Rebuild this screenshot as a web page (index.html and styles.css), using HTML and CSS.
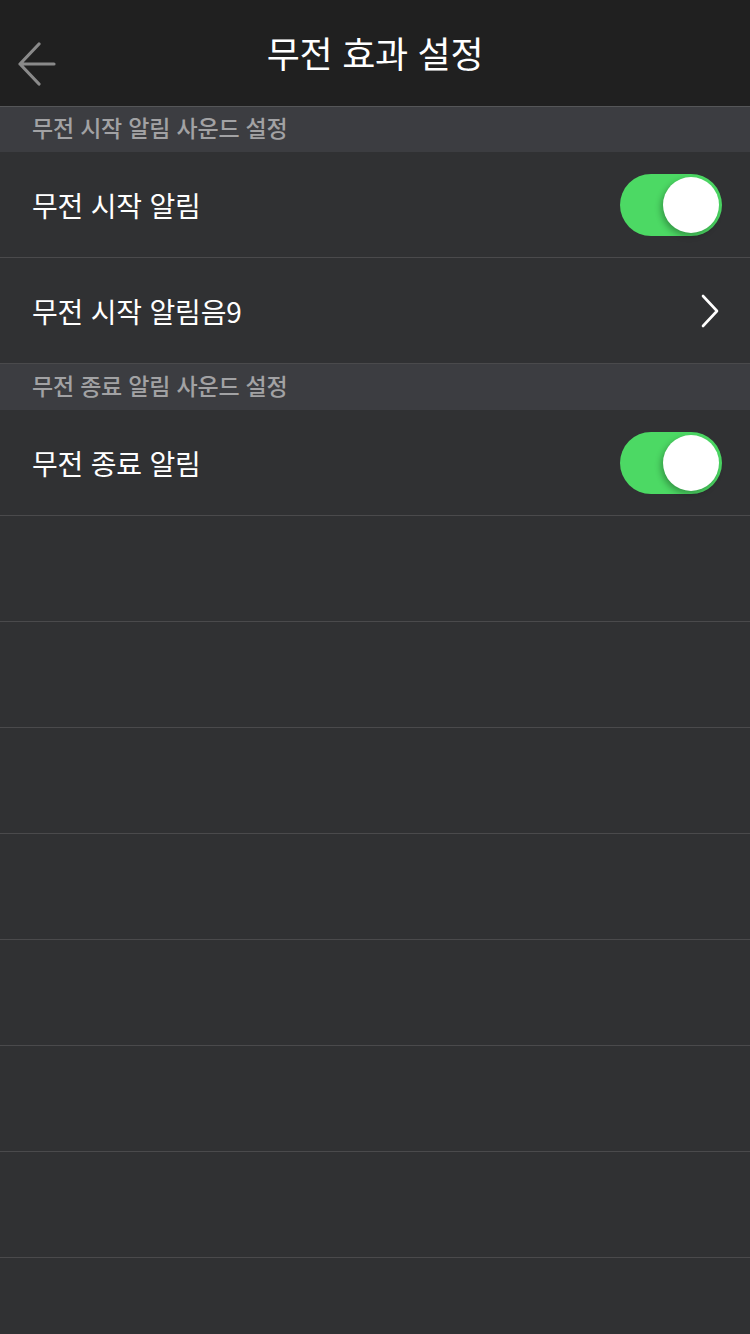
FILE: index.html
```html
<!DOCTYPE html>
<html lang="ko">
<head>
<meta charset="utf-8">
<link rel="stylesheet" href="styles.css">
</head>
<body>
<div class="page">
  <header class="topbar">
    <button class="back" aria-label="뒤로">
      <svg width="40" height="44" viewBox="0 0 40 44"><path d="M22 2 L3 22 L22 42 M3 22 H37" fill="none" stroke="#8a8a8a" stroke-width="3.2" stroke-linecap="round" stroke-linejoin="round"/></svg>
    </button>
    <h1 class="title">무전 효과 설정</h1>
  </header>
  <div class="section">무전 시작 알림 사운드 설정</div>
  <div class="row"><span class="label">무전 시작 알림</span><span class="toggle on"><span class="knob"></span></span></div>
  <div class="row"><span class="label">무전 시작 알림음9</span>
    <svg class="chev" width="20" height="34" viewBox="0 0 20 34"><path d="M3 2 L17 17 L3 32" fill="none" stroke="#fff" stroke-width="2.6" stroke-linecap="round" stroke-linejoin="round"/></svg>
  </div>
  <div class="section tall">무전 종료 알림 사운드 설정</div>
  <div class="row"><span class="label">무전 종료 알림</span><span class="toggle on"><span class="knob"></span></span></div>
  <div class="row"></div>
  <div class="row"></div>
  <div class="row"></div>
  <div class="row"></div>
  <div class="row"></div>
  <div class="row"></div>
  <div class="row"></div>
  <div class="row"></div>
</div>
</body>
</html>
```
FILE: styles.css
```css
html, body { margin: 0; padding: 0; }
body {
  background: #303133;
  font-family: "Noto Sans CJK KR", "Noto Sans", sans-serif;
  width: 750px;
  height: 1334px;
  overflow: hidden;
}
.page { display: flex; flex-direction: column; }
.topbar {
  background: #202020;
  border-bottom: 1px solid #555658;
  display: flex;
  align-items: center;
  justify-content: center;
  position: relative;
  box-sizing: border-box;
  height: 107px;
}
.back {
  position: absolute;
  left: 17px;
  top: 42px;
  background: none;
  border: 0;
  padding: 0;
  width: 40px;
  height: 44px;
}
.back svg { display: block; }
.title {
  margin: 0;
  color: #ffffff;
  font-size: 36px;
  font-weight: 400;
  letter-spacing: -0.3px;
  margin-top: -2px;
}
.section {
  height: 45px;
  box-sizing: border-box;
  background: #3c3d41;
  color: #a2a2a4;
  font-size: 23px;
  font-weight: 500;
  padding: 0 0 5px 32px;
  display: flex;
  align-items: center;
  letter-spacing: -0.2px;
}
.section.tall { height: 46px; }
.row {
  height: 106px;
  box-sizing: border-box;
  border-bottom: 1px solid #4a4a4c;
  background: #303133;
  display: flex;
  align-items: center;
  justify-content: space-between;
  padding: 0 28px 0 32px;
}
.label {
  color: #ffffff;
  font-size: 28px;
  letter-spacing: -0.2px;
}
.toggle {
  width: 102px;
  height: 62px;
  border-radius: 31px;
  background: #4cd964;
  display: flex;
  align-items: center;
  justify-content: flex-end;
  padding-right: 3px;
  box-sizing: border-box;
}
.knob {
  width: 56px;
  height: 56px;
  border-radius: 50%;
  background: #ffffff;
  box-shadow: -2px 3px 6px rgba(0,0,0,0.3);
}
.chev { margin-right: 2px; }
```
